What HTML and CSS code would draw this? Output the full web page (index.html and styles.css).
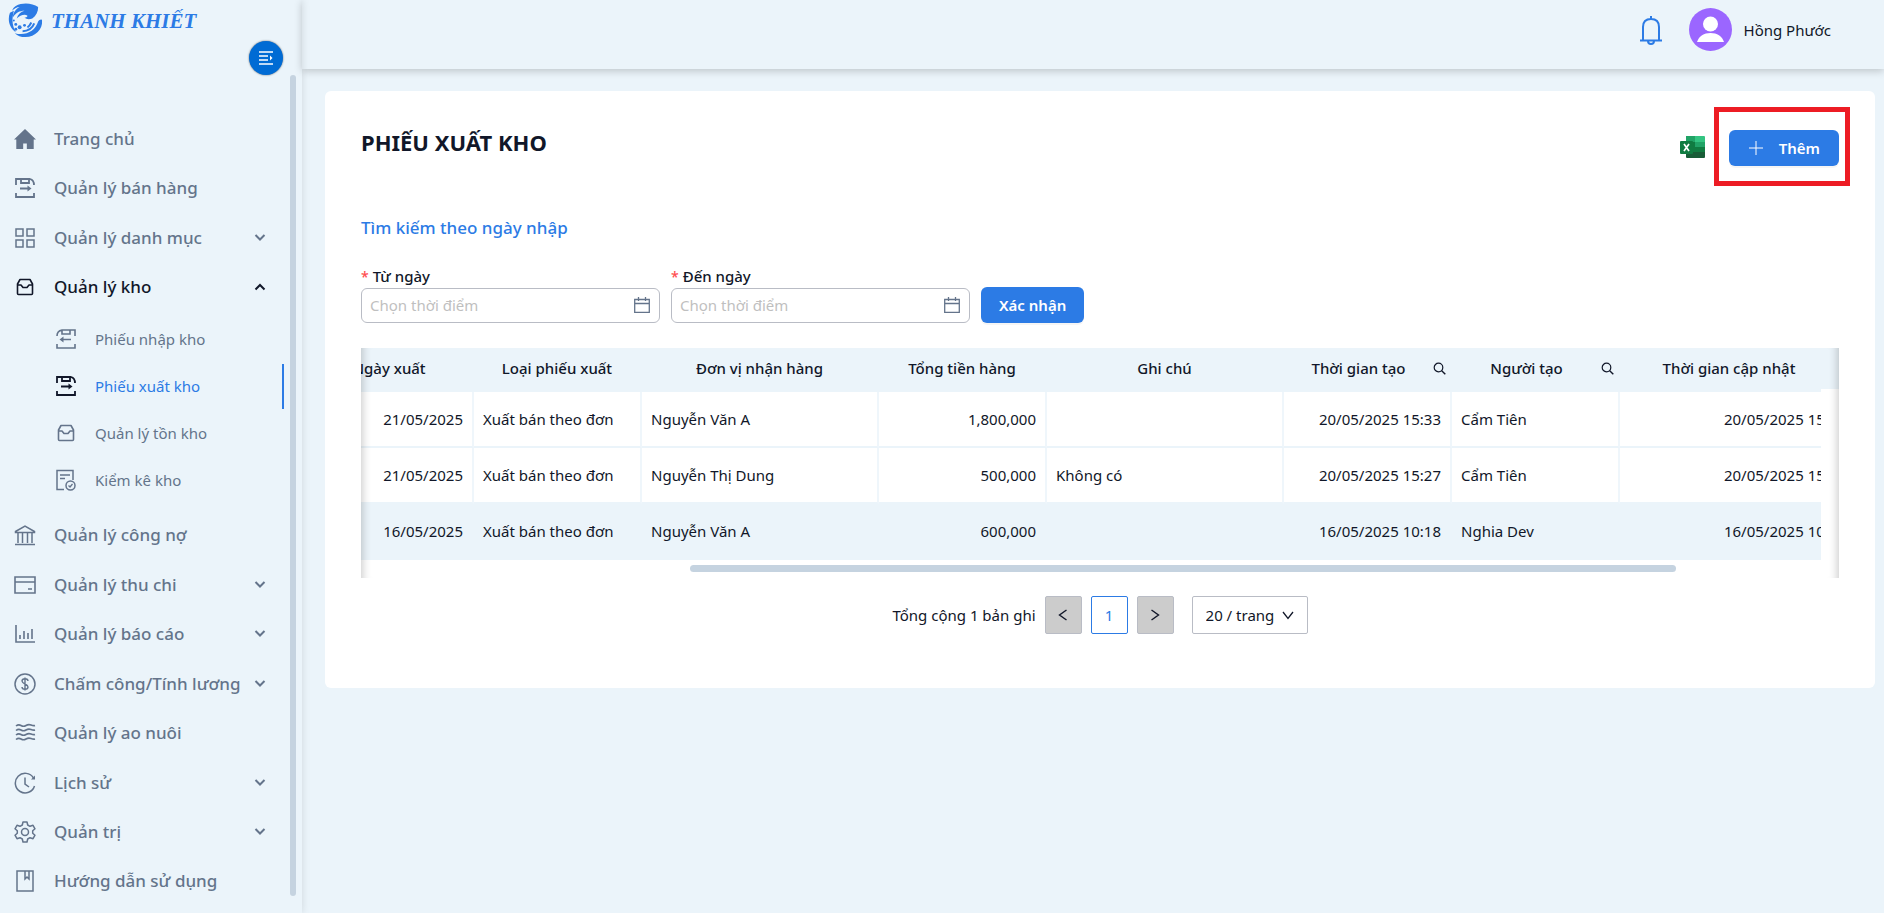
FILE: index.html
```
<!DOCTYPE html>
<html lang="vi">
<head>
    <meta charset="UTF-8">
    <meta name="viewport" content="width=device-width, initial-scale=1.0">
    <title>Phiếu xuất kho</title>
    <link rel="stylesheet" href="styles.css">
</head>
<body>
    <!-- shared icons -->
    <svg class="icon-defs" aria-hidden="true">
        <symbol id="i-down" viewBox="0 0 12 12"><path d="M1.500 3 6 7.500 10.500 3" fill="none" stroke="currentColor" stroke-width="2"/></symbol>
        <symbol id="i-up" viewBox="0 0 12 12"><path d="M1.500 8.500 6 4l4.500 4.500" fill="none" stroke="currentColor" stroke-width="2"/></symbol>
        <symbol id="i-export" viewBox="0 0 22 22"><path d="M2 8V2h14q4 1 4 6M2 16v4h18v-4M7 2v4h8V2M6 11.500h9" fill="none" stroke="currentColor" stroke-width="1.800"/><path d="m13.500 8.500 4 3-4 3z" fill="currentColor"/></symbol>
        <symbol id="i-import" viewBox="0 0 22 22"><path d="M20 8V2H7Q2 3 2 8M2 16v4h18v-4M15 2v4H7V2M16 11.500H7" fill="none" stroke="currentColor" stroke-width="1.600"/><path d="m8.500 8.500-4 3 4 3z" fill="currentColor"/></symbol>
        <symbol id="i-box" viewBox="0 0 22 22"><path d="M6 3.500h10L18.500 8v9.500q0 1-1 1h-13q-1 0-1-1V8zM3.500 9H7l2 2.500h4L15 9h3.500" fill="none" stroke="currentColor" stroke-width="1.600" stroke-linejoin="round"/></symbol>
        <symbol id="i-search" viewBox="0 0 13 13"><circle cx="5.500" cy="5.500" r="4.300" fill="none" stroke="currentColor" stroke-width="1.200"/><path d="m8.700 8.700 3.600 3.600" stroke="currentColor" stroke-width="1.400"/></symbol>
        <symbol id="i-calendar" viewBox="0 0 18 18"><path d="M1.700 3.500h14.600v12.800H1.700zM1.700 7.500h14.600M5.500 1v4M12.500 1v4" fill="none" stroke="currentColor" stroke-width="1.300"/></symbol>
    </svg>

    <div class="layout">
        <aside class="sidebar">
            <div class="brand">
                <svg class="brand-logo" viewBox="0 0 36 36" aria-hidden="true">
                    <path d="M8 3C15-1 25 0 31 4c0 5-2 9-6 12-3 1-6 1-8-1 2 0 3-1 3-2-3-2-8 0-11 3 1-4 4-7 8-8-5 0-9 2-12 7 0-5 3-9 7-11-3 0-6 2-8 4 1-2 2-4 4-5z"/>
                    <path d="M2 10c-3 8 0 16 6 20-3-5-4-11-3-17l1-5z"/>
                    <path d="M35 18c1 9-7 17-17 17-5 0-8-1-11-4 11 3 21-2 24-12 1-2 4-3 4-1z"/>
                    <path d="M15 29c6 0 10-3 12-8M20 25c2-1 3-3 4-5" fill="none" stroke="currentColor" stroke-width="2"/>
                    <circle cx="12" cy="25" r="2"/><circle cx="8" cy="22" r="1.500"/><circle cx="17" cy="23" r="1.500"/><circle cx="6" cy="18" r="1"/><circle cx="8" cy="27" r="1.500"/>
                </svg>
                <span class="brand-name">THANH KHIẾT</span>
            </div>
            <button class="toggle" type="button" aria-label="Thu gọn menu">
                <svg viewBox="0 0 14 14" width="14" height="14"><path d="M0 1h14M0 5h9M0 9h9M0 13h14" stroke="#fff" stroke-width="1.400"/><path d="M11 4.500 13.500 7 11 9.500z" fill="#fff"/></svg>
            </button>
            <div class="menu-wrap">
                <ul class="menu">
                    <li><a class="item" href="#">
                        <svg class="icon" viewBox="0 0 24 24"><path d="M12 1 24 12.500h-2.500V23H14v-6h-4v6H2.500V12.500H0z" fill="currentColor"/></svg>
                        <span>Trang chủ</span></a></li>
                    <li><a class="item" href="#">
                        <svg class="icon"><use href="#i-export"/></svg>
                        <span>Quản lý bán hàng</span></a></li>
                    <li><button class="item" type="button">
                        <svg class="icon" viewBox="0 0 22 22"><path d="M2 2h7v7H2zM13 2h7v7h-7zM2 13h7v7H2zM13 13h7v7h-7z" fill="none" stroke="currentColor" stroke-width="1.500"/></svg>
                        <span>Quản lý danh mục</span><svg class="arrow"><use href="#i-down"/></svg></button></li>
                    <li class="open"><button class="item" type="button" aria-expanded="true">
                        <svg class="icon"><use href="#i-box"/></svg>
                        <span>Quản lý kho</span><svg class="arrow"><use href="#i-up"/></svg></button>
                        <ul class="submenu">
                            <li><a class="subitem" href="#"><svg class="icon"><use href="#i-import"/></svg><span>Phiếu nhập kho</span></a></li>
                            <li><a class="subitem active" href="#"><svg class="icon"><use href="#i-export"/></svg><span>Phiếu xuất kho</span></a></li>
                            <li><a class="subitem" href="#"><svg class="icon"><use href="#i-box"/></svg><span>Quản lý tồn kho</span></a></li>
                            <li><a class="subitem" href="#"><svg class="icon" viewBox="0 0 22 22"><path d="M9 20.500H2V1.500h16V11M5 6h10M5 9.500h5" fill="none" stroke="currentColor" stroke-width="1.500"/><circle cx="15.500" cy="16.500" r="4.500" fill="none" stroke="currentColor" stroke-width="1.500"/><path d="m13.500 16.500 1.500 1.500 2.500-3" fill="none" stroke="currentColor" stroke-width="1.300"/></svg><span>Kiểm kê kho</span></a></li>
                        </ul></li>
                    <li><a class="item" href="#">
                        <svg class="icon" viewBox="0 0 22 22"><path d="M1.500 7.500 11 2l9.500 5.500v1h-19zM4 8.500V19M8.500 8.500V19M13.500 8.500V19M18 8.500V19M1 20.500h20" fill="none" stroke="currentColor" stroke-width="1.500"/></svg>
                        <span>Quản lý công nợ</span></a></li>
                    <li><button class="item" type="button">
                        <svg class="icon" viewBox="0 0 22 22"><path d="M1 3h20v16H1zM1 8h20M14 15h4" fill="none" stroke="currentColor" stroke-width="1.600"/></svg>
                        <span>Quản lý thu chi</span><svg class="arrow"><use href="#i-down"/></svg></button></li>
                    <li><button class="item" type="button">
                        <svg class="icon" viewBox="0 0 22 22"><path d="M2 2v17h19M6 16v-4M10 16V8M14 16v-6M18 16V6" fill="none" stroke="currentColor" stroke-width="1.600"/></svg>
                        <span>Quản lý báo cáo</span><svg class="arrow"><use href="#i-down"/></svg></button></li>
                    <li><button class="item" type="button">
                        <svg class="icon" viewBox="0 0 22 22"><circle cx="11" cy="11" r="10" fill="none" stroke="currentColor" stroke-width="1.500"/><path d="M14 8c0-3-6-3-6 0s6 3 6 6-6 3-6 0M11 4.500v13" fill="none" stroke="currentColor" stroke-width="1.400"/></svg>
                        <span>Chấm công/Tính lương</span><svg class="arrow"><use href="#i-down"/></svg></button></li>
                    <li><a class="item" href="#">
                        <svg class="icon" viewBox="0 0 22 22"><path d="M2 4q2.500-2 5-.5t5 0 5-.5 4 .5M2 8.500q2.500-2 5-.5t5 0 5-.5 4 .5M2 13q2.500-2 5-.5t5 0 5-.5 4 .5M2 17.500q2.500-2 5-.5t5 0 5-.5 4 .5" fill="none" stroke="currentColor" stroke-width="1.600"/></svg>
                        <span>Quản lý ao nuôi</span></a></li>
                    <li><button class="item" type="button">
                        <svg class="icon" viewBox="0 0 22 22"><path d="M19.500 6A9.800 9.800 0 1 0 20.500 14M11 5.500V12l4 3" fill="none" stroke="currentColor" stroke-width="1.500"/><path d="M17 7.500h4v-4z" fill="currentColor"/></svg>
                        <span>Lịch sử</span><svg class="arrow"><use href="#i-down"/></svg></button></li>
                    <li><button class="item" type="button">
                        <svg class="icon" viewBox="0 0 22 22"><path d="M9 1h4l.7 3 2.300 1.300 3-1 2 3.500-2.300 2V12.200l2.300 2-2 3.500-3-1L13.700 18 13 21H9l-.7-3L6 16.700l-3 1-2-3.500 2.300-2V9.800L1 7.800l2-3.500 3 1L8.300 4z" fill="none" stroke="currentColor" stroke-width="1.500" stroke-linejoin="round"/><circle cx="11" cy="11" r="3.500" fill="none" stroke="currentColor" stroke-width="1.500"/></svg>
                        <span>Quản trị</span><svg class="arrow"><use href="#i-down"/></svg></button></li>
                    <li><a class="item" href="#">
                        <svg class="icon" viewBox="0 0 22 22"><path d="M3 1h16v20H3zM11 1v8l2-2 2 2V1" fill="none" stroke="currentColor" stroke-width="1.500"/></svg>
                        <span>Hướng dẫn sử dụng</span></a></li>
                </ul>
                <div class="menu-scroll"></div>
            </div>
        </aside>

        <div class="page">
            <header class="topbar">
                <button class="bell" type="button" aria-label="Thông báo">
                    <svg viewBox="0 0 24 30" width="24" height="30"><path d="M1 25.500h22M4 25V12c0-5 3-8 8-8s8 3 8 8v13M12 4V1M9 26c0 4 6 4 6 0" fill="none" stroke="currentColor" stroke-width="2"/></svg>
                </button>
                <svg class="avatar" viewBox="0 0 43 43" aria-hidden="true"><circle cx="21.500" cy="21.500" r="21.500" fill="#9b66ff"/><circle cx="21.500" cy="16" r="7.500" fill="#fff"/><path d="M8 34c2-6 7-9 13.500-9S33 28 35 34z" fill="#fff"/></svg>
                <span class="user-name">Hồng Phước</span>
            </header>

            <main class="card">
                <div class="card-head">
                    <h1>PHIẾU XUẤT KHO</h1>
                    <div class="actions">
                        <button class="excel" type="button" aria-label="Xuất Excel">
                            <svg viewBox="0 0 25 24" width="25" height="24"><path d="M6 1h10v6H6z" fill="#21a366"/><path d="M15 1h9q1 0 1 1v5H15z" fill="#33c481"/><path d="M6 7h10v5H6z" fill="#107c41"/><path d="M15 7h10v5H15z" fill="#21a366"/><path d="M6 12h19v6H6z" fill="#107c41"/><path d="M6 17h19v5q0 1-1 1H7q-1 0-1-1z" fill="#185c37"/><rect y="6" width="13" height="13" rx="1" fill="#107c41"/><path d="m4 9 5 7M9 9l-5 7" stroke="#fff" stroke-width="1.700"/></svg>
                        </button>
                        <div class="highlight">
                            <button class="btn btn-add" type="button">
                                <svg viewBox="0 0 14 14" width="14" height="14"><path d="M7 0v14M0 7h14" stroke="#fff" stroke-width="1"/></svg>
                                Thêm
                            </button>
                        </div>
                    </div>
                </div>

                <h2>Tìm kiếm theo ngày nhập</h2>
                <form class="search">
                    <div class="field">
                        <label for="from">Từ ngày</label>
                        <div class="date"><input id="from" type="text" placeholder="Chọn thời điểm"><svg><use href="#i-calendar"/></svg></div>
                    </div>
                    <div class="field">
                        <label for="to">Đến ngày</label>
                        <div class="date"><input id="to" type="text" placeholder="Chọn thời điểm"><svg><use href="#i-calendar"/></svg></div>
                    </div>
                    <button class="btn" type="button">Xác nhận</button>
                </form>

                <div class="table-box">
                    <div class="table-view">
                        <table>
                            <colgroup>
                                <col class="w-sm"><col class="w-sm"><col class="w-lg"><col class="w-sm"><col class="w-lg"><col class="w-sm"><col class="w-sm"><col class="w-lg">
                            </colgroup>
                            <thead>
                                <tr>
                                    <th>Ngày xuất</th>
                                    <th>Loại phiếu xuất</th>
                                    <th>Đơn vị nhận hàng</th>
                                    <th>Tổng tiền hàng</th>
                                    <th>Ghi chú</th>
                                    <th><div class="th-search"><span>Thời gian tạo</span><svg><use href="#i-search"/></svg></div></th>
                                    <th><div class="th-search"><span>Người tạo</span><svg><use href="#i-search"/></svg></div></th>
                                    <th><div class="th-search"><span>Thời gian cập nhật</span><svg><use href="#i-search"/></svg></div></th>
                                </tr>
                            </thead>
                            <tbody>
                                <tr><td class="num">21/05/2025</td><td>Xuất bán theo đơn</td><td>Nguyễn Văn A</td><td class="num">1,800,000</td><td></td><td class="num">20/05/2025 15:33</td><td>Cẩm Tiên</td><td class="num">20/05/2025 15:33</td></tr>
                                <tr><td class="num">21/05/2025</td><td>Xuất bán theo đơn</td><td>Nguyễn Thị Dung</td><td class="num">500,000</td><td>Không có</td><td class="num">20/05/2025 15:27</td><td>Cẩm Tiên</td><td class="num">20/05/2025 15:27</td></tr>
                                <tr class="hover"><td class="num">16/05/2025</td><td>Xuất bán theo đơn</td><td>Nguyễn Văn A</td><td class="num">600,000</td><td></td><td class="num">16/05/2025 10:18</td><td>Nghia Dev</td><td class="num">16/05/2025 10:18</td></tr>
                            </tbody>
                        </table>
                        <div class="table-track"><div class="table-thumb"></div></div>
                    </div>
                    <div class="gutter"></div>
                </div>

                <div class="pager">
                    <span>Tổng cộng 1 bản ghi</span>
                    <button class="page-btn" type="button" aria-label="Trang trước"><svg viewBox="0 0 10 12" width="10" height="12"><path d="M8.500 1 1.500 6l7 5" fill="none" stroke="currentColor" stroke-width="1.400"/></svg></button>
                    <button class="page-btn current" type="button">1</button>
                    <button class="page-btn" type="button" aria-label="Trang sau"><svg viewBox="0 0 10 12" width="10" height="12"><path d="m1.500 1 7 5-7 5" fill="none" stroke="currentColor" stroke-width="1.400"/></svg></button>
                    <div class="page-size">
                        <select aria-label="Số dòng mỗi trang"><option>20 / trang</option></select>
                        <svg viewBox="0 0 12 9" width="12" height="9"><path d="m1 1 5 6.500L11 1" fill="none" stroke="currentColor" stroke-width="1.300"/></svg>
                    </div>
                </div>
            </main>
        </div>
    </div>
</body>
</html>
```
FILE: styles.css
```
* {
    box-sizing: border-box;
}
body {
    margin: 0;
    background-color: #ebf4fa;
    color: #111729;
    font-family: "Noto Sans", "Open Sans", sans-serif;
    font-size: 15px;
    line-height: 20px;
}
button, input, select {
    font-family: inherit;
    font-size: inherit;
    line-height: inherit;
    color: inherit;
}
button {
    border: none;
    background: none;
    padding: 0;
    cursor: pointer;
}
ul {
    margin: 0;
    padding: 0;
    list-style: none;
}
a {
    color: inherit;
    text-decoration: none;
}
.icon-defs {
    position: absolute;
    width: 0;
    height: 0;
}
.layout {
    display: flex;
    min-height: 100vh;
}

/* sidebar */
.sidebar {
    width: 302px;
    flex-shrink: 0;
    display: flex;
    flex-direction: column;
    box-shadow: 0 0 8px rgba(0, 0, 0, 0.12);
    z-index: 1;
}
.brand {
    display: flex;
    align-items: center;
    gap: 8px;
    height: 41px;
    padding-left: 8px;
    color: #2c7be5;
}
.brand-logo {
    width: 35px;
    height: 35px;
    fill: currentColor;
}
.brand-name {
    font-family: "Liberation Serif", serif;
    font-size: 21px;
    font-weight: bold;
    font-style: italic;
    white-space: nowrap;
}
.toggle {
    align-self: flex-end;
    display: flex;
    align-items: center;
    justify-content: center;
    width: 34px;
    height: 34px;
    margin-right: 19px;
    border-radius: 50%;
    background-color: #006bd4;
    box-shadow: 0 0 2px rgba(0, 0, 0, 0.6);
}
.menu-wrap {
    flex: 1;
    display: flex;
}
.menu {
    flex: 1;
    min-width: 0;
    display: flex;
    flex-direction: column;
    padding: 39px 0 7px;
    font-size: 17px;
    font-weight: 500;
    color: #64748b;
}
.menu > li {
    flex: 1 0 auto;
    display: flex;
    flex-direction: column;
}
.item {
    flex: 1;
    display: flex;
    align-items: center;
    gap: 18px;
    min-height: 48px;
    padding: 0 24px 0 14px;
    text-align: left;
    font-weight: inherit;
    white-space: nowrap;
}
.item span {
    flex: 1;
    min-width: 0;
}
.open .item {
    color: #111729;
}
.icon {
    width: 22px;
    height: 22px;
    flex-shrink: 0;
}
.arrow {
    width: 12px;
    height: 12px;
    flex-shrink: 0;
    margin-left: -18px;
}
.submenu {
    display: flex;
    flex-direction: column;
    gap: 2px;
    padding: 5px 6px 8px 0;
    font-size: 15px;
    font-weight: normal;
}
.subitem {
    display: flex;
    align-items: center;
    gap: 18px;
    height: 45px;
    padding-left: 55px;
    border-right: 2px solid transparent;
}
.subitem.active {
    color: #2c7be5;
    border-right-color: #2c7be5;
}
.subitem.active .icon {
    color: #111729;
}
.menu-scroll {
    width: 6px;
    flex-shrink: 0;
    margin: 0 6px 17px 0;
    border-radius: 3px;
    background-color: #c5d3e0;
}

/* top bar */
.page {
    flex: 1;
    min-width: 0;
}
.topbar {
    display: flex;
    align-items: center;
    justify-content: flex-end;
    height: 69px;
    padding: 0 53px 10px 0;
    box-shadow: 0 2px 8px rgba(0, 0, 0, 0.2);
}
.bell {
    display: flex;
    margin-right: 26px;
    color: #2c7be5;
}
.avatar {
    width: 43px;
    height: 43px;
    margin-right: 12px;
}

/* card */
.card {
    margin: 22px 9px 0 23px;
    padding: 16px 36px 54px;
    border-radius: 6px;
    background-color: #fff;
}
.card-head {
    display: flex;
    justify-content: space-between;
}
h1 {
    margin: 20px 0 0;
    font-size: 22px;
    line-height: 30px;
}
.actions {
    display: flex;
    align-items: center;
    gap: 9px;
    margin-right: -11px;
}
.excel {
    display: flex;
}
.highlight {
    padding: 18px 6px 15px 10px;
    border: 5px solid #ed1c24;
}
.btn {
    height: 36px;
    padding: 0 18px;
    border-radius: 6px;
    background-color: #2c7be5;
    color: #fff;
    font-weight: 600;
    box-shadow: 0 2px 0 rgba(0, 0, 0, 0.04);
}
.btn-add {
    display: flex;
    align-items: center;
    gap: 16px;
    padding: 0 19px 0 20px;
}
h2 {
    margin: 30px 0 25px;
    font-size: 17px;
    line-height: 24px;
    font-weight: 500;
    color: #2c7be5;
}
.search {
    display: flex;
    align-items: flex-end;
    gap: 11px;
}
.field label {
    display: block;
    line-height: 22px;
    font-weight: 500;
}
.field label::before {
    content: "*";
    margin-right: 4px;
    color: #ff4d4f;
    font-size: 14px;
}
.date {
    display: flex;
    align-items: center;
    width: 299px;
    height: 35px;
    padding: 0 8px 1px;
    border: 1px solid #b9bcc5;
    border-radius: 6px;
}
.date input {
    flex: 1;
    min-width: 0;
    padding: 0;
    border: none;
    outline: none;
    background: none;
}
.date input::placeholder {
    color: #bfbfbf;
}
.date svg {
    width: 18px;
    height: 18px;
    color: #64748b;
}

/* table */
.table-box {
    position: relative;
    display: flex;
    height: 230px;
    margin-top: 25px;
    overflow: hidden;
}
.table-box::before, .table-box::after {
    content: "";
    position: absolute;
    top: 0;
    bottom: 0;
    width: 30px;
}
.table-box::before {
    left: 0;
    box-shadow: inset 10px 0 8px -8px rgba(5, 5, 5, 0.2);
}
.table-box::after {
    right: 0;
    box-shadow: inset -10px 0 8px -8px rgba(5, 5, 5, 0.2);
}
.table-view {
    flex: 1;
    min-width: 0;
    overflow: hidden;
}
table {
    width: 1551px;
    margin-left: -55px;
    table-layout: fixed;
    border-collapse: separate;
    border-spacing: 0;
}
.w-sm {
    width: 168px;
}
.w-lg {
    width: 237px;
}
th {
    height: 44px;
    padding: 0 6px 4px 4px;
    background-color: #ebf4fa;
    font-weight: 500;
}
td {
    height: 56px;
    padding: 0 9px;
    border-right: 2px solid #eff6fb;
    border-bottom: 2px solid #ebf4fa;
}
.num {
    text-align: right;
}
.hover td {
    background-color: #ebf4fa;
    border-color: #ebf4fa;
}
.th-search {
    display: flex;
    align-items: center;
    gap: 4px;
}
.th-search span {
    flex: 1;
}
.th-search svg {
    width: 13px;
    height: 13px;
}
.table-track {
    padding-top: 5px;
}
.table-thumb {
    width: 67.5%;
    height: 7px;
    margin-left: 329px;
    border-radius: 4px;
    background-color: #c5d3e0;
}
.gutter {
    width: 18px;
    height: 41px;
    background-color: #ebf4fa;
}

/* pagination */
.pager {
    display: flex;
    align-items: center;
    justify-content: center;
    gap: 9px;
    margin-top: 18px;
}
.page-btn {
    display: flex;
    align-items: center;
    justify-content: center;
    width: 37px;
    height: 38px;
    border: 1px solid #b9bcc5;
    border-radius: 2px;
    background-color: #ccc;
}
.page-btn.current {
    border-color: #2c7be5;
    background-color: #fff;
    color: #2c7be5;
}
.page-size {
    display: flex;
    align-items: center;
    width: 116px;
    height: 38px;
    margin-left: 9px;
    padding: 0 13px;
    border: 1px solid #b9bcc5;
    border-radius: 2px;
}
.page-size select {
    flex: 1;
    min-width: 0;
    padding: 0;
    border: none;
    outline: none;
    background: none;
    appearance: none;
}
```
